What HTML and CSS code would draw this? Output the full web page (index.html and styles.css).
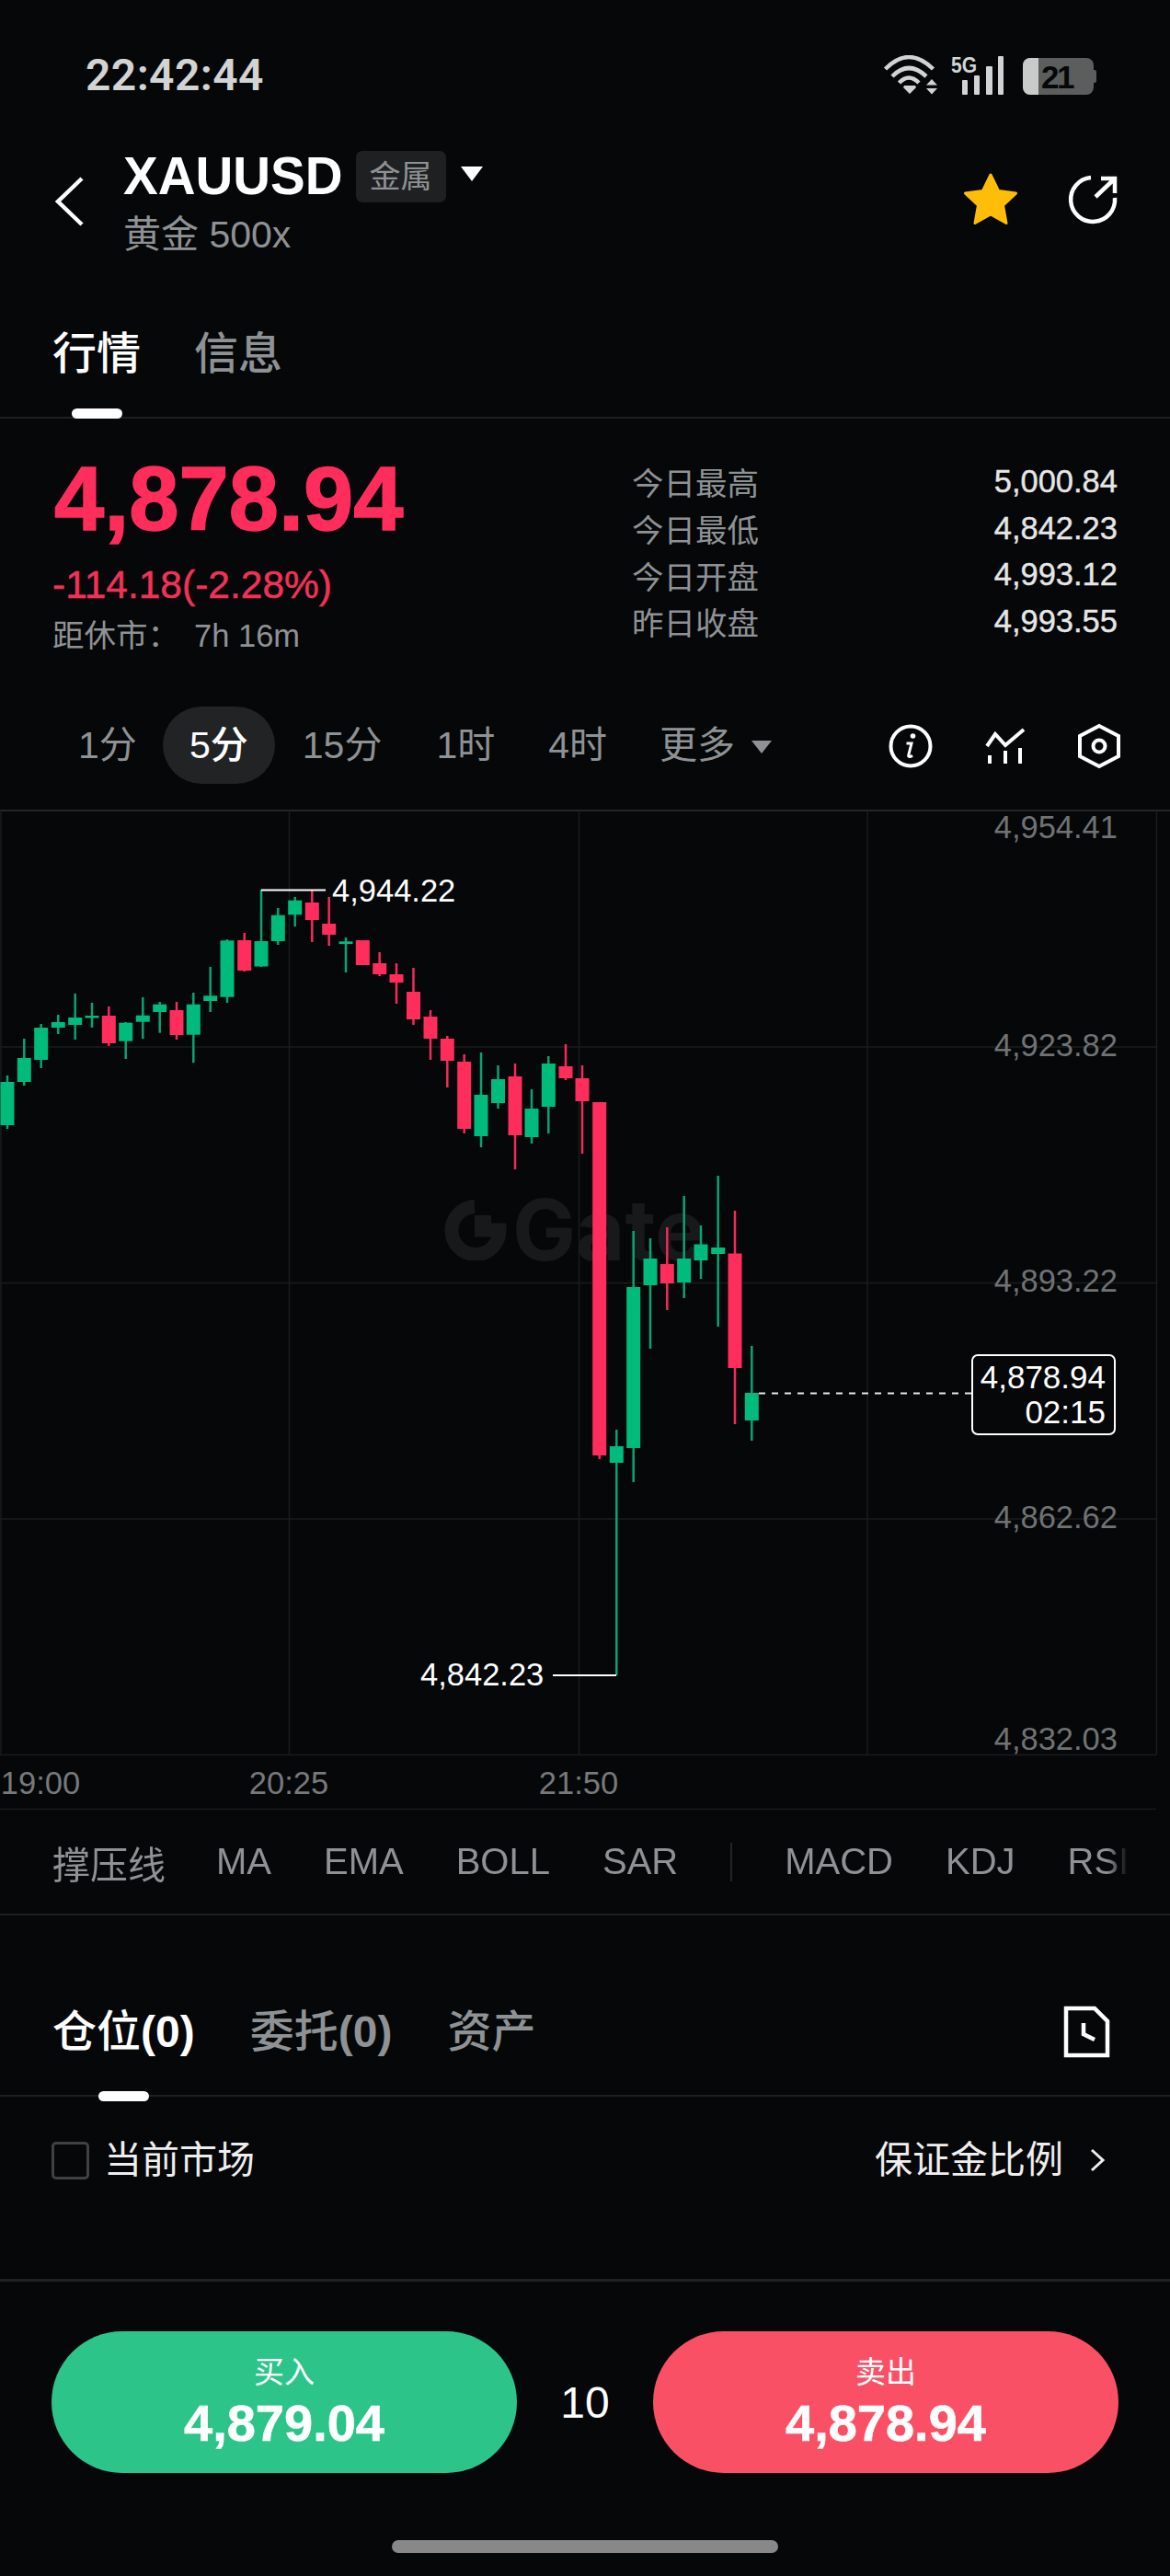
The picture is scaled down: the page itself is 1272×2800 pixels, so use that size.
FILE: index.html
```html
<!DOCTYPE html>
<html lang="zh-CN">
<head>
  <meta charset="UTF-8">
  <meta name="viewport" content="width=device-width, initial-scale=1.0">
  <title>XAUUSD</title>
  <link rel="stylesheet" href="styles.css">
</head>
<body>

  <div class="status-bar">
    <span class="clock">22:42:44</span>
    <div class="status-icons">
      <svg class="wifi" viewBox="0 0 60 44" width="60" height="44">
        <path d="M2.5 15Q28-11 54.5 15M10 23Q28 5 47 23M17.5 30Q28 19 39 30" />
        <path class="solid" d="M23 33h12l1 2-7 7-7-7zM53 26l6 6.500H47zM47 36h12l-6 6.500z" />
      </svg>
      <svg class="signal" viewBox="0 -8 60 52" width="60" height="52">
        <text x="1" y="19" textLength="28" lengthAdjust="spacingAndGlyphs">5G</text>
        <rect x="13" y="27" width="6" height="16" rx="1" />
        <rect x="26" y="22" width="6" height="21" rx="1" />
        <rect x="39" y="12" width="7" height="31" rx="1" />
        <rect x="52" y="1" width="6" height="42" rx="1" />
      </svg>
      <div class="battery"><span class="battery-level"></span><span class="battery-text">21</span></div>
    </div>
  </div>

  <div class="nav">
    <svg class="back" viewBox="0 0 36 60" width="36" height="60"><path d="M31 5 5 30l26 25" /></svg>
    <div class="symbol">
      <div class="symbol-top">
        <span class="symbol-name">XAUUSD</span>
        <span class="tag">金属</span>
        <span class="caret caret-white"></span>
      </div>
      <div class="symbol-sub">黄金 500x</div>
    </div>
    <div class="nav-icons">
      <svg viewBox="0 0 60 58" width="60" height="58">
        <path class="star" d="M30 2l8.500 17.500 19 2.600-14 13 3.500 19.400L30 45l-17 9.500 3.500-19.400-14-13 19-2.600z" />
      </svg>
      <svg class="share" viewBox="0 0 56 56" width="56" height="56">
        <path d="M26 5A24 24 0 1 0 52 27M31 26 51 7M37 6H52V22" />
      </svg>
    </div>
  </div>

  <div class="tabs main-tabs">
    <span class="tab active">行情</span>
    <span class="tab">信息</span>
  </div>

  <div class="quote">
    <div class="quote-left">
      <div class="last-price">4,878.94</div>
      <div class="price-change">-114.18(-2.28%)</div>
      <div class="close-timer"><span>距休市：</span><span>7h 16m</span></div>
    </div>
    <div class="stats">
      <div class="stat"><span>今日最高</span><b>5,000.84</b></div>
      <div class="stat"><span>今日最低</span><b>4,842.23</b></div>
      <div class="stat"><span>今日开盘</span><b>4,993.12</b></div>
      <div class="stat"><span>昨日收盘</span><b>4,993.55</b></div>
    </div>
  </div>

  <div class="timeframes">
    <span class="tf tf-1m">1分</span>
    <span class="tf tf-active">5分</span>
    <span class="tf tf-15m">15分</span>
    <span class="tf tf-1h">1时</span>
    <span class="tf tf-4h">4时</span>
    <span class="tf tf-more">更多<span class="caret caret-grey"></span></span>
    <div class="tf-icons">
      <svg viewBox="0 0 50 50" width="50" height="50">
        <circle cx="25" cy="25" r="21.500" />
        <circle class="solid" cx="27.500" cy="14" r="2.800" />
        <path class="thin" d="M20.500 22h5.500l-3.300 13c-.4 1.800 1.300 2.300 4.300.2" />
      </svg>
      <svg class="tf-bars" viewBox="0 0 46 44" width="46" height="44">
        <path d="M3 22 12 9l11 12L43 4M6 32v9M23 27v14M39 24v17" />
      </svg>
      <svg class="tf-hex" viewBox="0 0 46 50" width="46" height="50">
        <path d="M23 3 44 14V36L23 47 2 36V14z" />
        <circle cx="23" cy="25" r="6.500" />
      </svg>
    </div>
  </div>

  <div class="chart">
    <div class="watermark">
      <svg viewBox="0 0 70 66" width="70" height="66">
        <path d="M33 7.500A26 26 0 1 0 60 33H33" />
        <rect x="33" y="17" width="18" height="16" />
      </svg>
      <span>Gate</span>
    </div>

    <svg class="plot" viewBox="0 880 1272 1087" width="1272" height="1087">
      <g class="grid">
        <path class="grid-top" d="M0 881H1272" />
        <path d="M0 1138H1257M0 1394.500H1257M0 1651H1257M0 1907.500H1257M0 1966.500H1257" />
        <path d="M1 881V1907M314.500 881V1907M629.500 881V1907M943 881V1907M1257.500 881V1907" />
      </g>

      <g class="candles up">
        <path d="M8 1169V1227" /><rect x="0.500" y="1176" height="47" />
        <path d="M26.300 1129V1180" /><rect x="18.800" y="1150" height="26" />
        <path d="M44.700 1113V1161" /><rect x="37.200" y="1117" height="35" />
        <path d="M63.300 1103V1124" /><rect x="55.800" y="1111" height="6" />
        <path d="M81.700 1080V1130" /><rect x="74.200" y="1106" height="8" />
        <path d="M100 1090V1117" /><rect x="92.500" y="1104" height="2.500" />
        <path d="M136.700 1111V1151" /><rect x="129.200" y="1111.700" height="20" />
        <path d="M155.300 1084V1129" /><rect x="147.800" y="1103.700" height="7" />
        <path d="M173.700 1089V1122.700" /><rect x="166.200" y="1091.700" height="8.300" />
        <path d="M210.300 1079V1155.300" /><rect x="202.800" y="1091.700" height="33" />
        <path d="M228.700 1051V1100" /><rect x="221.200" y="1082.300" height="5.700" />
        <path d="M247 1021V1090" /><rect x="239.500" y="1022.300" height="61.400" />
        <path d="M284 967V1051" /><rect x="276.500" y="1023" height="27.500" />
        <path d="M302.300 987V1027" /><rect x="294.800" y="994.700" height="28.300" />
        <path d="M320.700 975V1007" /><rect x="313.200" y="978.700" height="15.600" />
        <path d="M376 1019V1057" /><rect x="368.500" y="1023.300" height="2.700" />
        <path d="M523 1144V1247" /><rect x="515.500" y="1190" height="45" />
        <path d="M541.500 1158V1205" /><rect x="534" y="1173" height="26" />
        <path d="M578 1184V1243" /><rect x="570.500" y="1205" height="31" />
        <path d="M596.300 1148V1232" /><rect x="588.800" y="1156" height="47" />
        <path d="M670.300 1554V1821" /><rect x="662.800" y="1572" height="18" />
        <path d="M688.700 1338V1611" /><rect x="681.200" y="1399" height="175" />
        <path d="M707 1346V1466" /><rect x="699.500" y="1368" height="29" />
        <path d="M743.700 1300V1411" /><rect x="736.200" y="1368" height="26" />
        <path d="M762 1332V1390" /><rect x="754.500" y="1352.500" height="17.500" />
        <path d="M780.700 1278V1442" /><rect x="773.200" y="1356" height="7" />
        <path d="M817.300 1463V1566" /><rect x="809.800" y="1514" height="30" />
      </g>

      <g class="candles down">
        <path d="M118.300 1094V1137" /><rect x="110.800" y="1104" height="30" />
        <path d="M192 1089V1130" /><rect x="184.500" y="1098" height="27" />
        <path d="M265.700 1014V1056" /><rect x="258.200" y="1022" height="33" />
        <path d="M339.300 967V1024" /><rect x="331.800" y="981" height="19" />
        <path d="M357.700 975V1028" /><rect x="350.200" y="1004" height="12" />
        <rect x="386.800" y="1022" height="27" />
        <path d="M412.700 1035V1061" /><rect x="405.200" y="1047" height="12" />
        <path d="M431 1047V1091" /><rect x="423.500" y="1059" height="9" />
        <path d="M449.500 1052V1114" /><rect x="442" y="1078" height="30" />
        <path d="M468 1098V1152" /><rect x="460.500" y="1105" height="24" />
        <path d="M486.300 1126V1182" /><rect x="478.800" y="1129" height="24" />
        <path d="M504.700 1146V1232" /><rect x="497.200" y="1154" height="73" />
        <path d="M560 1156V1271" /><rect x="552.500" y="1170" height="64" />
        <path d="M615 1135V1174" /><rect x="607.500" y="1159" height="13" />
        <path d="M633 1158V1254" /><rect x="625.500" y="1172" height="25" />
        <path d="M651.700 1198V1586" /><rect x="644.200" y="1198" height="384" />
        <path d="M725.300 1334V1424" /><rect x="717.800" y="1374" height="21" />
        <path d="M799 1316V1548" /><rect x="791.500" y="1362.500" height="124.500" />
      </g>

      <path class="marker" d="M284 967.500H354M601 1821H670" />
      <path class="last-line" d="M825 1514.500H1056" />
    </svg>

    <span class="y-label y1">4,954.41</span>
    <span class="y-label y2">4,923.82</span>
    <span class="y-label y3">4,893.22</span>
    <span class="y-label y4">4,862.62</span>
    <span class="y-label y5">4,832.03</span>

    <span class="mark-label mark-high">4,944.22</span>
    <span class="mark-label mark-low">4,842.23</span>

    <div class="last-box"><span>4,878.94</span><span>02:15</span></div>

    <span class="x-label x1">19:00</span>
    <span class="x-label x2">20:25</span>
    <span class="x-label x3">21:50</span>
  </div>

  <div class="indicators">
    <div class="indicator-list">
      <span>撑压线</span>
      <span>MA</span>
      <span>EMA</span>
      <span>BOLL</span>
      <span>SAR</span>
      <i class="indicator-sep"></i>
      <span>MACD</span>
      <span>KDJ</span>
      <span>RSI</span>
    </div>
  </div>

  <div class="tabs order-tabs">
    <span class="tab active">仓位<b>(0)</b></span>
    <span class="tab">委托<b>(0)</b></span>
    <span class="tab">资产</span>
    <svg class="history" viewBox="0 0 54 60" width="54" height="60">
      <path d="M4 4H35L49 18V55H4zM23 20V32L35 38" />
    </svg>
  </div>

  <div class="filter-row">
    <label class="market-check"><span class="checkbox"></span>当前市场</label>
    <span class="margin-link">保证金比例
      <svg viewBox="0 0 18 26" width="18" height="26"><path d="M3 2 15 13 3 24" /></svg>
    </span>
  </div>

  <div class="trade-bar">
    <button class="trade-btn buy"><span>买入</span><b>4,879.04</b></button>
    <span class="lot">10</span>
    <button class="trade-btn sell"><span>卖出</span><b>4,878.94</b></button>
  </div>

  <div class="home-indicator"></div>

</body>
</html>
```

FILE: styles.css
```css
* {
  box-sizing: border-box;
  margin: 0;
  padding: 0;
}

body {
  width: 1272px;
  height: 2800px;
  overflow: hidden;
  background-color: #050708;
  color: #fff;
  font-family: "Liberation Sans", "Noto Sans CJK SC", sans-serif;
}

svg {
  display: block;
  fill: none;
  stroke: currentColor;
}

.solid {
  fill: currentColor;
  stroke: none;
}

/* status bar */
.status-bar {
  height: 150px;
  padding: 60px 80px 0 93px;
  display: flex;
  justify-content: space-between;
  align-items: flex-start;
  color: #d2d3d3;
}

.clock {
  font-family: Roboto, sans-serif;
  font-size: 48px;
  font-weight: 600;
  line-height: 44px;
  letter-spacing: 0.400px;
}

.status-icons {
  display: flex;
  align-items: flex-start;
  gap: 13px;
}

.wifi path {
  stroke-width: 4.5;
}

.signal {
  margin-top: -8px;
  margin-right: 6px;
}

.signal rect {
  fill: currentColor;
  stroke: none;
}

.signal text {
  fill: currentColor;
  stroke: none;
  font-size: 24px;
  font-weight: 700;
}

.battery {
  position: relative;
  width: 77px;
  height: 40px;
  margin-top: 3px;
  margin-right: 3px;
  background: #5c5d5d;
  border-radius: 8px;
}

.battery::after {
  content: "";
  position: absolute;
  right: -3px;
  top: 13px;
  width: 3px;
  height: 14px;
  background: #5c5d5d;
  border-radius: 0 2px 2px 0;
}

.battery-level {
  position: absolute;
  left: 0;
  top: 0;
  width: 17px;
  height: 40px;
  background: #c9caca;
  border-radius: 8px 0 0 8px;
}

.battery-text {
  position: absolute;
  left: 20px;
  top: 0;
  color: #050708;
  font-size: 35px;
  font-weight: 700;
  line-height: 42px;
  letter-spacing: -2.500px;
}

/* header */
.nav {
  height: 150px;
  padding-left: 58px;
  padding-right: 56px;
  display: flex;
  align-items: flex-start;
}

.back {
  margin-top: 39px;
  color: #fff;
  stroke-width: 4.500;
}

.symbol {
  margin-left: 40px;
  margin-top: 12px;
}

.symbol-top {
  display: flex;
  align-items: center;
  height: 60px;
}

.symbol-name {
  font-size: 56.500px;
  font-weight: 700;
  line-height: 60px;
}

.tag {
  margin-left: 14px;
  width: 98px;
  height: 56px;
  background: #1e2021;
  border-radius: 7px;
  color: #8f9295;
  font-size: 34px;
  line-height: 56px;
  text-align: center;
}

.caret {
  display: inline-block;
  border-left: 12px solid transparent;
  border-right: 12px solid transparent;
}

.caret-white {
  margin-left: 16px;
  margin-top: -6px;
  border-top: 16px solid #fff;
}

.symbol-sub {
  margin-top: 8px;
  color: #8f9295;
  font-size: 41px;
  line-height: 50px;
}

.nav-icons {
  margin-left: auto;
  margin-top: 38px;
  display: flex;
  gap: 53px;
}

.star {
  fill: #fdbd08;
  stroke: #fdbd08;
  stroke-width: 3;
  stroke-linejoin: round;
}

.share {
  stroke-width: 4.500;
}

/* tabs */
.tabs {
  display: flex;
  padding-left: 57px;
  border-bottom: 2px solid #1d2021;
}

.main-tabs {
  height: 155px;
  padding-top: 57px;
  gap: 58px;
}

.tab {
  position: relative;
  color: #8f9295;
  font-size: 48px;
  font-weight: 500;
  line-height: 56px;
  height: 56px;
}

.tab.active {
  color: #fff;
}

.tab.active::after {
  content: "";
  position: absolute;
  left: 50%;
  bottom: -42px;
  width: 55px;
  height: 11px;
  margin-left: -27px;
  background: #fff;
  border-radius: 6px;
}

/* quote */
.quote {
  height: 285px;
  padding: 0 57px 0 57px;
  display: flex;
  justify-content: space-between;
}

.quote-left {
  padding-top: 38px;
}

.last-price {
  margin-left: 2px;
  color: #ff2d5c;
  font-size: 97.500px;
  font-weight: 700;
  line-height: 100px;
  -webkit-text-stroke: 1.500px #ff2d5c;
}

.price-change {
  margin-top: 18px;
  color: #f03259;
  font-size: 42.500px;
  line-height: 50px;
  -webkit-text-stroke: 0.500px #f03259;
}

.close-timer {
  margin-top: 8px;
  color: #8f9295;
  font-size: 34.500px;
  line-height: 44px;
  display: flex;
  gap: 18px;
  white-space: nowrap;
}

.close-timer span:first-child {
  width: 136px;
}

.stats {
  width: 528px;
  padding-top: 43px;
}

.stat {
  height: 50.700px;
  display: flex;
  justify-content: space-between;
  align-items: center;
  color: #8f9295;
  font-size: 34.500px;
}

.stat b {
  color: #e6e6e6;
  font-weight: 400;
  -webkit-text-stroke: 0.400px #e6e6e6;
}

/* timeframe row */
.timeframes {
  height: 140px;
  padding-left: 85px;
  padding-right: 54px;
  padding-top: 28px;
  display: flex;
  align-items: flex-start;
}

.tf {
  color: #8f9295;
  font-size: 41px;
  line-height: 84px;
  white-space: nowrap;
}

.tf-active {
  width: 122px;
  height: 84px;
  margin-left: 28px;
  background: #212324;
  border-radius: 42px;
  color: #fff;
  font-weight: 500;
  text-align: center;
}

.tf-15m {
  margin-left: 30px;
}

.tf-1h {
  margin-left: 59px;
}

.tf-4h {
  margin-left: 58px;
}

.tf-more {
  margin-left: 57px;
  display: flex;
  align-items: center;
}

.caret-grey {
  margin-left: 18px;
  margin-top: 4px;
  border-left-width: 11px;
  border-right-width: 11px;
  border-top: 14px solid #8f9295;
}

.tf-icons {
  margin-left: auto;
  margin-top: 18px;
  display: flex;
  align-items: center;
}

.tf-icons svg {
  stroke-width: 4;
}

.tf-icons .thin {
  stroke-width: 3;
}

.tf-bars {
  margin-left: 55px;
}

.tf-hex {
  margin-left: 56px;
}

/* chart, everything in here sits on the plot canvas */
.chart {
  position: relative;
  height: 1087px;
}

.plot {
  position: absolute;
  left: 0;
  top: 0;
}

.grid path {
  stroke: #1a1c1d;
  stroke-width: 1.500;
}

.grid .grid-top {
  stroke: #242627;
  stroke-width: 2;
}

.candles path {
  stroke-width: 2.500;
}

.candles rect {
  width: 15px;
  stroke: none;
}

.up path {
  stroke: #0ba372;
}

.up rect {
  fill: #00bb7b;
}

.down path {
  stroke: #f22b5a;
}

.down rect {
  fill: #ff2d5c;
}

.marker {
  stroke: #fff;
  stroke-width: 2;
}

.last-line {
  stroke: #e6e6e6;
  stroke-width: 2;
  stroke-dasharray: 7 7;
}

.watermark {
  position: absolute;
  left: 483px;
  top: 422px;
  display: flex;
  align-items: center;
  gap: 4px;
  color: #17191a;
  font-family: Inter, sans-serif;
  font-size: 92px;
  font-weight: 700;
  line-height: 70px;
}

.watermark path {
  stroke-width: 15;
}

.watermark rect {
  fill: currentColor;
  stroke: none;
}

.y-label,
.mark-label,
.x-label {
  position: absolute;
  font-size: 34.500px;
  line-height: 40px;
  white-space: nowrap;
}

.y-label {
  right: 57px;
  color: #707274;
}

.y1 { top: -1px; }
.y2 { top: 236px; }
.y3 { top: 492px; }
.y4 { top: 749px; }
.y5 { top: 990px; }

.mark-label {
  color: #fff;
}

.mark-high {
  left: 361px;
  top: 68px;
}

.mark-low {
  left: 457px;
  top: 920px;
}

.last-box {
  position: absolute;
  left: 1056px;
  top: 592px;
  width: 157px;
  height: 88px;
  padding: 4px 9px 0 0;
  display: flex;
  flex-direction: column;
  align-items: flex-end;
  background: #050708;
  border: 2px solid #fff;
  border-radius: 7px;
  font-size: 35px;
  line-height: 38px;
}

.x-label {
  top: 1038px;
  color: #77797b;
  transform: translateX(-50%);
}

.x1 { left: 44px; }
.x2 { left: 314px; }
.x3 { left: 629px; }

/* indicators */
.indicators {
  height: 115px;
  padding-left: 57px;
  border-bottom: 2px solid #1d2021;
}

.indicator-list {
  width: 1170px;
  height: 113px;
  display: flex;
  align-items: center;
  gap: 57px;
  overflow: hidden;
  color: #8f9295;
  font-size: 40px;
  white-space: nowrap;
  -webkit-mask-image: linear-gradient(to right, #000 98%, transparent);
  mask-image: linear-gradient(to right, #000 98%, transparent);
}

.indicator-list span:first-child {
  margin-right: -2px;
  font-size: 41px;
}

.indicator-sep {
  flex: none;
  width: 2px;
  height: 42px;
  background: #222526;
}

/* positions */
.order-tabs {
  height: 197px;
  padding-top: 99px;
  padding-right: 63px;
  gap: 60px;
}

.tab b {
  font-weight: 700;
}

.order-tabs .tab.active::after {
  bottom: -47px;
}

.history {
  margin-left: auto;
  margin-top: -2px;
  stroke-width: 4.500;
}

.filter-row {
  height: 201px;
  padding: 47px 70px 0 56px;
  display: flex;
  justify-content: space-between;
  align-items: flex-start;
  border-bottom: 3px solid #1f2122;
  color: #eee;
  font-size: 41px;
  line-height: 44px;
}

.market-check {
  display: flex;
  align-items: center;
  gap: 16px;
}

.checkbox {
  width: 41px;
  height: 41px;
  border: 3px solid #3f4143;
  border-radius: 5px;
}

.margin-link {
  display: flex;
  align-items: center;
  gap: 28px;
}

.margin-link svg {
  stroke-width: 3;
}

/* buy / sell */
.trade-bar {
  padding: 54px 56px 0 56px;
  display: flex;
  justify-content: space-between;
  align-items: center;
}

.trade-btn {
  width: 506px;
  height: 154px;
  display: flex;
  flex-direction: column;
  align-items: center;
  border: none;
  border-radius: 77px;
  padding-top: 24px;
  color: #fff;
  font-family: inherit;
}

.trade-btn span {
  font-size: 33px;
  line-height: 42px;
}

.trade-btn b {
  margin-top: 4px;
  font-size: 56px;
  line-height: 60px;
  -webkit-text-stroke: 0.600px #fff;
}

.buy {
  background-color: #2dc48a;
}

.sell {
  background-color: #fa5066;
}

.lot {
  font-size: 48px;
  line-height: 54px;
  margin-top: 2px;
}

.home-indicator {
  position: absolute;
  left: 426px;
  top: 2761px;
  width: 420px;
  height: 14px;
  background: #888;
  border-radius: 7px;
}
```
